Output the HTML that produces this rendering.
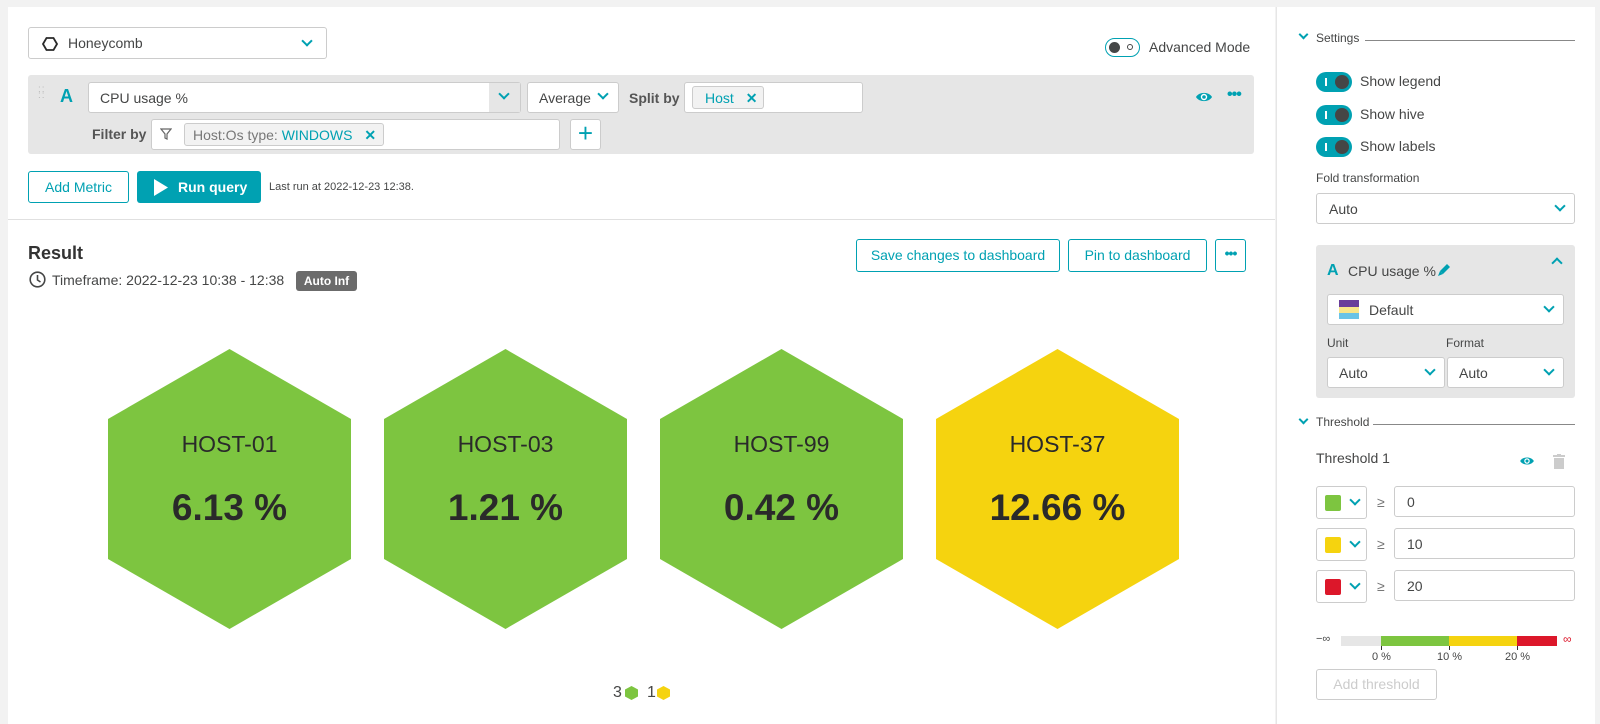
<!DOCTYPE html>
<html><head><meta charset="utf-8"><style>
*{box-sizing:border-box;margin:0;padding:0}
body{width:1600px;height:724px;background:#f2f2f2;font-family:"Liberation Sans",sans-serif;color:#454646;position:relative;overflow:hidden;font-size:14px}
.a{position:absolute}
.box{position:absolute;background:#fff;border:1px solid #ccc;border-radius:3px}
.t{position:absolute;white-space:nowrap}
.teal{color:#00a1b2}
.chev{position:absolute;width:8px;height:8px;border-right:2px solid #00a1b2;border-bottom:2px solid #00a1b2;transform:rotate(45deg)}
.btn{position:absolute;border:1px solid #00a1b2;border-radius:3px;color:#00a1b2;background:#fff;text-align:center;font-size:14px}
.tog{position:absolute;width:36px;height:20px;border-radius:10px;background:#00a1b2}
.tog:before{content:"";position:absolute;left:9px;top:6px;width:2px;height:8px;background:#fff}
.tog:after{content:"";position:absolute;right:3px;top:3px;width:14px;height:14px;border-radius:7px;background:#454646}
.hex{position:absolute;width:243px;height:280px;clip-path:polygon(50% 0,100% 25%,100% 75%,50% 100%,0 75%,0 25%);text-align:center;color:#2a2a2a}
.hex .n{position:absolute;left:0;right:0;top:82px;font-size:23px}
.hex .v{position:absolute;left:0;right:0;top:138px;font-size:37px;font-weight:bold}
.tag{position:absolute;background:#f2f2f2;border:1px solid #ccc;border-radius:3px;font-size:14px}
.lbl{font-size:12px}
</style></head><body>
<div class="a" style="left:8px;top:7px;width:1267px;height:717px;background:#fff"></div>
<div class="a" style="left:1276px;top:7px;width:319px;height:717px;background:#fff;border-left:1px solid #e6e6e6"></div>

<!-- honeycomb select -->
<div class="box" style="left:28px;top:27px;width:299px;height:32px"></div>
<svg class="a" style="left:42px;top:36px" width="16" height="16" viewBox="0 0 16 16"><polygon points="4.5,2 11.5,2 15,8 11.5,14 4.5,14 1,8" fill="none" stroke="#2a2a2a" stroke-width="1.8"/></svg>
<div class="t" style="left:68px;top:35px;font-size:14px">Honeycomb</div>
<div class="chev" style="left:303px;top:37px"></div>

<!-- advanced mode -->
<div class="a" style="left:1105px;top:38px;width:35px;height:19px;border:1px solid #00a1b2;border-radius:10px"></div>
<div class="a" style="left:1109px;top:42px;width:11px;height:11px;border-radius:6px;background:#454646"></div>
<div class="a" style="left:1127px;top:44px;width:6px;height:6px;border-radius:3px;border:1px solid #454646"></div>
<div class="t" style="left:1149px;top:39px;font-size:14px">Advanced Mode</div>

<!-- query box -->
<div class="a" style="left:28px;top:75px;width:1226px;height:79px;background:#e6e6e6;border-radius:3px"></div>
<div class="t" style="left:38px;top:87px;color:#bbb;font-size:10px;line-height:6px;letter-spacing:1px">::<br>::</div>
<div class="t teal" style="left:60px;top:86px;font-size:18px;font-weight:bold">A</div>
<div class="box" style="left:88px;top:82px;width:433px;height:31px"></div>
<div class="a" style="left:489px;top:83px;width:31px;height:29px;background:#e6e6e6"></div>
<div class="t" style="left:100px;top:90px">CPU usage %</div>
<div class="chev" style="left:500px;top:90px"></div>
<div class="box" style="left:527px;top:82px;width:92px;height:31px"></div>
<div class="t" style="left:539px;top:90px">Average</div>
<div class="chev" style="left:599px;top:90px"></div>
<div class="t" style="left:629px;top:90px;font-weight:bold;color:#555">Split by</div>
<div class="box" style="left:684px;top:82px;width:179px;height:31px"></div>
<div class="tag teal" style="left:692px;top:86px;width:72px;height:23px;padding:3px 0 0 12px">Host <span style="margin-left:8px;font-weight:bold">✕</span></div>
<svg class="a" style="left:1195px;top:90px" width="18" height="14" viewBox="0 0 18 14"><path d="M1 7C4 1.5 14 1.5 17 7C14 12.5 4 12.5 1 7Z" fill="#00a1b2"/><circle cx="9" cy="7" r="3.2" fill="#fff"/><circle cx="9" cy="7" r="1.8" fill="#00a1b2"/></svg>
<div class="t teal" style="left:1227px;top:86px;font-size:16px;font-weight:bold;letter-spacing:-1px">•••</div>

<div class="t" style="left:92px;top:126px;font-weight:bold;color:#555">Filter by</div>
<div class="box" style="left:151px;top:119px;width:409px;height:31px"></div>
<svg class="a" style="left:160px;top:128px" width="12" height="12" viewBox="0 0 12 12"><path d="M1 1H11L7 6V11L5 10V6Z" fill="none" stroke="#666" stroke-width="1.2"/></svg>
<div class="tag" style="left:184px;top:123px;width:200px;height:23px;padding:3px 0 0 8px;color:#777">Host:Os type: <span class="teal">WINDOWS</span> <span class="teal" style="margin-left:8px;font-weight:bold">✕</span></div>
<div class="box" style="left:570px;top:119px;width:31px;height:31px;color:#00a1b2;font-size:26px;line-height:27px;text-align:center">+</div>

<!-- run row -->
<div class="btn" style="left:28px;top:171px;width:101px;height:32px;line-height:30px">Add Metric</div>
<div class="a" style="left:137px;top:171px;width:124px;height:32px;background:#00a1b2;border-radius:3px"></div>
<svg class="a" style="left:154px;top:179px" width="14" height="17"><polygon points="0,0 14,8.5 0,17" fill="#fff"/></svg>
<div class="t" style="left:178px;top:179px;color:#fff;font-weight:bold;font-size:14px">Run query</div>
<div class="t" style="left:269px;top:181px;font-size:11px">Last run at 2022-12-23 12:38.</div>

<div class="a" style="left:8px;top:219px;width:1267px;height:1px;background:#e0e0e0"></div>

<!-- result -->
<div class="t" style="left:28px;top:243px;font-size:18px;font-weight:bold;color:#333">Result</div>
<svg class="a" style="left:29px;top:271px" width="17" height="17" viewBox="0 0 17 17"><circle cx="8.5" cy="8.5" r="7.3" fill="none" stroke="#454646" stroke-width="1.6"/><path d="M8.5 4V9L11.5 11" fill="none" stroke="#454646" stroke-width="1.6"/></svg>
<div class="t" style="left:52px;top:272px;font-size:14px">Timeframe: 2022-12-23 10:38 - 12:38</div>
<div class="a" style="left:296px;top:271px;width:61px;height:20px;background:#6b6b6b;border-radius:3px;color:#fff;font-size:12px;font-weight:bold;text-align:center;line-height:20px">Auto Inf</div>

<div class="btn" style="left:856px;top:239px;width:204px;height:33px;line-height:31px">Save changes to dashboard</div>
<div class="btn" style="left:1068px;top:239px;width:139px;height:33px;line-height:31px">Pin to dashboard</div>
<div class="btn" style="left:1215px;top:239px;width:31px;height:33px;line-height:27px;font-weight:bold;letter-spacing:-1px">•••</div>

<!-- hexes -->
<div class="hex" style="left:108px;top:349px;background:#7dc540"><div class="n">HOST-01</div><div class="v">6.13 %</div></div>
<div class="hex" style="left:384px;top:349px;background:#7dc540"><div class="n">HOST-03</div><div class="v">1.21 %</div></div>
<div class="hex" style="left:660px;top:349px;background:#7dc540"><div class="n">HOST-99</div><div class="v">0.42 %</div></div>
<div class="hex" style="left:936px;top:349px;background:#f5d30f"><div class="n">HOST-37</div><div class="v">12.66 %</div></div>

<div class="t" style="left:613px;top:684px;font-size:16px">3</div>
<svg class="a" style="left:625px;top:686px" width="13" height="14"><polygon points="6.5,0 13,3.5 13,10.5 6.5,14 0,10.5 0,3.5" fill="#7dc540"/></svg>
<div class="t" style="left:647px;top:684px;font-size:16px">1</div>
<svg class="a" style="left:657px;top:686px" width="13" height="14"><polygon points="6.5,0 13,3.5 13,10.5 6.5,14 0,10.5 0,3.5" fill="#f5d30f"/></svg>

<!-- right panel -->
<div class="chev" style="left:1300px;top:31px;width:7px;height:7px"></div>
<div class="t lbl" style="left:1316px;top:31px">Settings</div>
<div class="a" style="left:1365px;top:40px;width:210px;height:1px;background:#888"></div>
<div class="tog" style="left:1316px;top:72px"></div><div class="t" style="left:1360px;top:73px">Show legend</div>
<div class="tog" style="left:1316px;top:105px"></div><div class="t" style="left:1360px;top:106px">Show hive</div>
<div class="tog" style="left:1316px;top:137px"></div><div class="t" style="left:1360px;top:138px">Show labels</div>
<div class="t lbl" style="left:1316px;top:171px">Fold transformation</div>
<div class="box" style="left:1316px;top:193px;width:259px;height:31px"></div>
<div class="t" style="left:1329px;top:201px">Auto</div>
<div class="chev" style="left:1556px;top:202px"></div>

<div class="a" style="left:1316px;top:245px;width:259px;height:153px;background:#e6e6e6;border-radius:3px"></div>
<div class="t teal" style="left:1327px;top:262px;font-size:16px;font-weight:bold">A</div>
<div class="t" style="left:1348px;top:263px">CPU usage %</div>
<svg class="a" style="left:1437px;top:262px" width="15" height="15" viewBox="0 0 15 15"><path d="M3 9L10 2L13 5L6 12Z" fill="#00a1b2"/><path d="M3 9L6 12L1 14Z" fill="#00a1b2"/></svg>
<div class="a" style="left:1553px;top:259px;width:8px;height:8px;border-left:2px solid #00a1b2;border-top:2px solid #00a1b2;transform:rotate(45deg)"></div>
<div class="box" style="left:1327px;top:294px;width:237px;height:31px"></div>
<div class="a" style="left:1339px;top:300px;width:20px;height:7px;background:#6a3d9a"></div>
<div class="a" style="left:1339px;top:307px;width:20px;height:6px;background:#f9e58a"></div>
<div class="a" style="left:1339px;top:313px;width:20px;height:6px;background:#6ac3e6"></div>
<div class="t" style="left:1369px;top:302px">Default</div>
<div class="chev" style="left:1545px;top:303px"></div>
<div class="t lbl" style="left:1327px;top:336px">Unit</div>
<div class="t lbl" style="left:1446px;top:336px">Format</div>
<div class="box" style="left:1327px;top:357px;width:118px;height:31px"></div>
<div class="t" style="left:1339px;top:365px">Auto</div>
<div class="chev" style="left:1426px;top:366px"></div>
<div class="box" style="left:1447px;top:357px;width:117px;height:31px"></div>
<div class="t" style="left:1459px;top:365px">Auto</div>
<div class="chev" style="left:1545px;top:366px"></div>

<div class="chev" style="left:1300px;top:416px;width:7px;height:7px"></div>
<div class="t lbl" style="left:1316px;top:415px">Threshold</div>
<div class="a" style="left:1373px;top:424px;width:202px;height:1px;background:#888"></div>
<div class="t" style="left:1316px;top:450px">Threshold 1</div>
<svg class="a" style="left:1519px;top:455px" width="16" height="12" viewBox="0 0 18 14"><path d="M1 7C4 1.5 14 1.5 17 7C14 12.5 4 12.5 1 7Z" fill="#00a1b2"/><circle cx="9" cy="7" r="3.2" fill="#fff"/><circle cx="9" cy="7" r="1.8" fill="#00a1b2"/></svg>
<svg class="a" style="left:1553px;top:454px" width="12" height="15"><rect x="0" y="1" width="12" height="2" fill="#ccc"/><rect x="4" y="0" width="4" height="2" fill="#ccc"/><rect x="1" y="4" width="10" height="11" fill="#ccc"/></svg>

<div class="box" style="left:1316px;top:486px;width:51px;height:33px"></div><div class="a" style="left:1325px;top:495px;width:16px;height:16px;background:#7dc540;border-radius:2px"></div><div class="chev" style="left:1351px;top:496px"></div>
<div class="t" style="left:1377px;top:494px;color:#777">≥</div>
<div class="box" style="left:1394px;top:486px;width:181px;height:31px"></div><div class="t" style="left:1407px;top:494px">0</div>
<div class="box" style="left:1316px;top:528px;width:51px;height:33px"></div><div class="a" style="left:1325px;top:537px;width:16px;height:16px;background:#f5d30f;border-radius:2px"></div><div class="chev" style="left:1351px;top:538px"></div>
<div class="t" style="left:1377px;top:536px;color:#777">≥</div>
<div class="box" style="left:1394px;top:528px;width:181px;height:31px"></div><div class="t" style="left:1407px;top:536px">10</div>
<div class="box" style="left:1316px;top:570px;width:51px;height:33px"></div><div class="a" style="left:1325px;top:579px;width:16px;height:16px;background:#dc172a;border-radius:2px"></div><div class="chev" style="left:1351px;top:580px"></div>
<div class="t" style="left:1377px;top:578px;color:#777">≥</div>
<div class="box" style="left:1394px;top:570px;width:181px;height:31px"></div><div class="t" style="left:1407px;top:578px">20</div>

<div class="t" style="left:1316px;top:633px;font-size:11px">−∞</div>
<div class="a" style="left:1341px;top:636px;width:40px;height:10px;background:#e6e6e6"></div>
<div class="a" style="left:1381px;top:636px;width:68px;height:10px;background:#7dc540"></div>
<div class="a" style="left:1449px;top:636px;width:68px;height:10px;background:#f5d30f"></div>
<div class="a" style="left:1517px;top:636px;width:40px;height:10px;background:#dc172a"></div>
<div class="t" style="left:1563px;top:632px;font-size:12px;color:#dc172a">∞</div>
<div class="a" style="left:1381px;top:646px;width:1px;height:4px;background:#333"></div>
<div class="a" style="left:1449px;top:646px;width:1px;height:4px;background:#333"></div>
<div class="a" style="left:1517px;top:646px;width:1px;height:4px;background:#333"></div>
<div class="t" style="left:1372px;top:651px;font-size:11px">0 %</div>
<div class="t" style="left:1437px;top:651px;font-size:11px">10 %</div>
<div class="t" style="left:1505px;top:651px;font-size:11px">20 %</div>
<div class="box" style="left:1316px;top:669px;width:121px;height:31px;color:#ccc;text-align:center;line-height:29px">Add threshold</div>
</body></html>
